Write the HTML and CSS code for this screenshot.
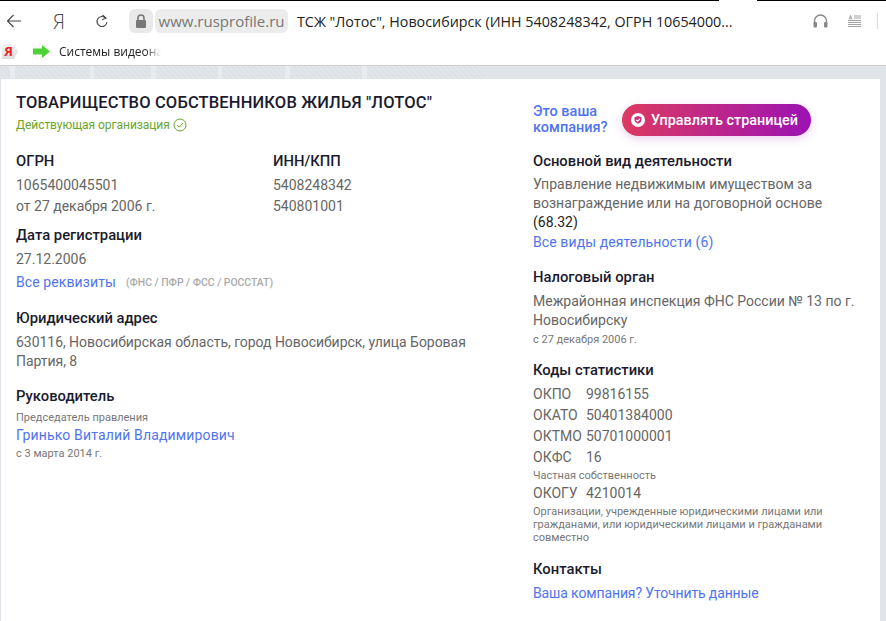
FILE: index.html
```html
<!DOCTYPE html>
<html lang="ru">
<head>
    <meta charset="UTF-8">
    <title>ТСЖ "Лотос"</title>
    <link rel="stylesheet" href="styles.css">
</head>
<body>
    <div class="topline"><span class="topline-a"></span><span class="topline-b"></span></div>
    <div class="toolbar">
        <svg class="ic-back" width="16" height="14" viewBox="0 0 16 14"><path d="M15 7H1.500M7.500 1L1.500 7l6 6" fill="none" stroke="#444" stroke-width="1.100"/></svg>
        <span class="ya">Я</span>
        <svg class="ic-reload" width="14" height="15" viewBox="0 0 14 15"><path d="M10.800 4.200A5 5 0 1 0 12 8" fill="none" stroke="#444" stroke-width="1.100"/><path d="M7.500 1l3.500 3.200-3.800 1.600" fill="none" stroke="#444" stroke-width="1.100"/></svg>
        <span class="lock"><svg width="12" height="14" viewBox="0 0 12 14"><path d="M3 6V4a3 3 0 0 1 6 0v2" fill="none" stroke="#777" stroke-width="1.600"/><rect x="1" y="6" width="10" height="8" rx="1" fill="#777"/></svg></span>
        <span class="host">www.rusprofile.ru</span>
        <span class="page-title">ТСЖ "Лотос", Новосибирск (ИНН 5408248342, ОГРН 10654000...</span>
        <svg class="ic-head" width="15" height="14" viewBox="0 0 15 14"><path d="M1.500 10V7a6 6 0 0 1 12 0v3" fill="none" stroke="#888" stroke-width="1.400"/><rect x="0.500" y="8" width="3.500" height="5.500" rx="1" fill="#888"/><rect x="11" y="8" width="3.500" height="5.500" rx="1" fill="#888"/></svg>
        <svg class="ic-read" width="13" height="13" viewBox="0 0 13 13"><path d="M1 4.500l1.500-4 1.500 4M1.500 3.200h2M6 1h7M6 3h7M0 5.500h13M0 7.500h13M0 9.500h13M0 11.500h13" fill="none" stroke="#999" stroke-width="0.900"/></svg>
        <span class="sep"></span>
    </div>
    <div class="bookmarks">
        <span class="ya-tab">Я</span>
        <svg class="ic-arrow" width="17" height="13" viewBox="0 0 17 13"><path d="M0 3.500h9V0l8 6.500-8 6.500V9.500H0z" fill="#4cd137"/></svg>
        <span class="bm-text">Системы видеонаб</span>
    </div>
    <div class="page">
        <div class="card">
            <div class="col-left">
                <h1 class="org-name">ТОВАРИЩЕСТВО СОБСТВЕННИКОВ ЖИЛЬЯ "ЛОТОС"</h1>
                <div class="status">Действующая организация
                    <svg width="14" height="14" viewBox="0 0 14 14"><circle cx="7" cy="7" r="6" fill="none" stroke="#6aa52b" stroke-width="1"/><path d="M4 7l2.200 2.200L10 5" fill="none" stroke="#6aa52b" stroke-width="1"/></svg>
                </div>
                <div class="codes">
                    <div>
                        <div class="label">ОГРН</div>
                        <div class="val">1065400045501</div>
                        <div class="val">от 27 декабря 2006 г.</div>
                    </div>
                    <div>
                        <div class="label">ИНН/КПП</div>
                        <div class="val">5408248342</div>
                        <div class="val">540801001</div>
                    </div>
                </div>
                <div class="label reg">Дата регистрации</div>
                <div class="val">27.12.2006</div>
                <div class="req"><a class="link">Все реквизиты</a><span class="req-note">(ФНС / ПФР / ФСС / РОССТАТ)</span></div>
                <div class="label addr">Юридический адрес</div>
                <div class="val">630116, Новосибирская область, город Новосибирск, улица Боровая Партия, 8</div>
                <div class="label boss">Руководитель</div>
                <div class="small">Председатель правления</div>
                <a class="link boss-name">Гринько Виталий Владимирович</a>
                <div class="small">с 3 марта 2014 г.</div>
            </div>
            <div class="col-right">
                <div class="claim">
                    <a class="claim-text">Это ваша компания?</a>
                    <span class="btn">
                        <svg width="14" height="14" viewBox="0 0 14 14"><circle cx="7" cy="7" r="7" fill="#fff"/><path d="M7 3l3.500 1.200v2.600c0 2-1.500 3.300-3.500 4-2-.7-3.500-2-3.500-4V4.200z" fill="#d0307a"/><path d="M5.200 6.800l1.400 1.400 2.200-2.300" fill="none" stroke="#fff" stroke-width="1.100"/></svg>
                        Управлять страницей
                    </span>
                </div>
                <div class="label main-act">Основной вид деятельности</div>
                <div class="val">Управление недвижимым имуществом за вознаграждение или на договорной основе <span class="code">(68.32)</span></div>
                <a class="link all-acts">Все виды деятельности (6)</a>
                <div class="label tax">Налоговый орган</div>
                <div class="val">Межрайонная инспекция ФНС России № 13 по г. Новосибирску</div>
                <div class="small tax-date">с 27 декабря 2006 г.</div>
                <div class="label stats">Коды статистики</div>
                <div class="stat"><span>ОКПО</span>99816155</div>
                <div class="stat"><span>ОКАТО</span>50401384000</div>
                <div class="stat"><span>ОКТМО</span>50701000001</div>
                <div class="stat"><span>ОКФС</span>16</div>
                <div class="small stat-note">Частная собственность</div>
                <div class="stat"><span>ОКОГУ</span>4210014</div>
                <div class="small stat-note">Организации, учрежденные юридическими лицами или гражданами, или юридическими лицами и гражданами совместно</div>
                <div class="label contacts">Контакты</div>
                <a class="link contact-link">Ваша компания? Уточнить данные</a>
            </div>
        </div>
    </div>
</body>
</html>
```

FILE: styles.css
```css
html, body {
    margin: 0;
    padding: 0;
}
body {
    width: 886px;
    height: 621px;
    overflow: hidden;
    background: #fff;
    font-family: Roboto, "Noto Sans", sans-serif;
    color: #1b1b2f;
    display: flex;
    flex-direction: column;
}
.topline {
    height: 1px;
    flex: none;
    display: flex;
    justify-content: space-between;
}
.topline-a {
    width: 719px;
    background: #000;
}
.topline-b {
    width: 129px;
    background: #000;
}
.toolbar {
    height: 37px;
    flex: none;
    padding-top: 3px;
    box-sizing: border-box;
    display: flex;
    align-items: center;
    font-family: "Open Sans", sans-serif;
}
.ic-back {
    margin-left: 6px;
}
.ya {
    margin-left: 31px;
    width: 14px;
    font-size: 20px;
    font-weight: 300;
    color: #444;
}
.ic-reload {
    margin-left: 28px;
}
.lock {
    margin-left: 20px;
    width: 24px;
    height: 24px;
    border-radius: 6px;
    background: #e9e9e9;
    display: flex;
    align-items: center;
    justify-content: center;
}
.host {
    margin-left: 2px;
    width: 133px;
    height: 24px;
    line-height: 24px;
    text-align: center;
    border-radius: 6px;
    background: #ececec;
    color: #777;
    font-size: 15px;
    white-space: nowrap;
}
.page-title {
    margin-left: 9px;
    width: 494px;
    font-size: 14.300px;
    color: #222;
    white-space: nowrap;
}
.ic-head {
    margin-left: 22px;
}
.ic-read {
    margin-left: 20px;
}
.sep {
    margin-left: 16px;
    width: 1px;
    height: 16px;
    background: #ddd;
}
.bookmarks {
    height: 28px;
    flex: none;
    display: flex;
    align-items: center;
    border-bottom: 1px solid #cfcfcf;
    box-sizing: border-box;
    font-family: "Open Sans", sans-serif;
}
.ya-tab {
    margin-left: 2px;
    width: 16px;
    height: 15px;
    line-height: 15px;
    padding-right: 3px;
    box-sizing: border-box;
    text-align: center;
    font-size: 13px;
    font-weight: bold;
    color: #e22;
    background: linear-gradient(#f6f6f6, #dcdcdc);
    clip-path: polygon(0 0, 75% 0, 100% 50%, 75% 100%, 0 100%);
}
.ic-arrow {
    margin-left: 15px;
}
.bm-text {
    margin-left: 9px;
    white-space: nowrap;
    font-size: 12px;
    color: #222;
    -webkit-mask-image: linear-gradient(to right, #000 78%, transparent 92%);
    mask-image: linear-gradient(to right, #000 78%, transparent 92%);
}
.page {
    flex: 1;
    background-color: #e1e4e8;
    background-image:
        linear-gradient(to right,
            transparent 10px, #e9ebee 10px, #e9ebee 15px, transparent 15px,
            transparent 90px, #e9ebee 90px, #e9ebee 94px, transparent 94px,
            transparent 151px, #e9ebee 151px, #e9ebee 156px, transparent 156px,
            transparent 218px, #e9ebee 218px, #e9ebee 222px, transparent 222px,
            transparent 285px, #e9ebee 285px, #e9ebee 290px, transparent 290px,
            transparent 362px, #e9ebee 362px, #e9ebee 367px, transparent 367px),
        repeating-linear-gradient(45deg, #dee1e5 0, #dee1e5 2px, #e2e5e9 2px, #e2e5e9 4px);
    background-size: 484px 14px;
    background-repeat: no-repeat;
    padding: 13px 6px 0 1px;
    display: flex;
    min-height: 0;
}
.card {
    flex: 1;
    background: #fff;
    display: flex;
    padding: 14px 0 0 15px;
}
.col-left {
    width: 517px;
    padding-right: 32px;
    box-sizing: border-box;
}
.col-right {
    width: 330px;
}
.org-name {
    margin: 0;
    font-size: 16.500px;
    letter-spacing: .15px;
    line-height: 19px;
    font-weight: 500;
    white-space: nowrap;
}
.status {
    margin-top: 5px;
    font-size: 12px;
    letter-spacing: -.05px;
    line-height: 16px;
    color: #6aa52b;
    display: flex;
    align-items: center;
    gap: 3px;
}
.codes {
    margin-top: 18px;
    display: flex;
}
.codes > div {
    flex: none;
    width: 257px;
}
.label {
    font-size: 14.800px;
    line-height: 20px;
    font-weight: 500;
}
.val {
    margin-top: 5px;
    font-size: 14px;
    line-height: 19px;
    color: #666;
}
.val + .val {
    margin-top: 2px;
}
.small {
    font-size: 11px;
    line-height: 13px;
    color: #777;
}
.link {
    display: block;
    font-size: 14px;
    line-height: 20px;
    color: #4f74f0;
}
.reg {
    margin-top: 9px;
}
.req {
    display: flex;
    align-items: center;
    margin-top: 3px;
}
.req .link {
    letter-spacing: .1px;
}
.req-note {
    margin-left: 10px;
    font-size: 10.400px;
    color: #aaa;
    font-weight: 500;
}
.addr {
    margin-top: 16px;
}
.addr + .val {
    letter-spacing: -.04px;
}
.boss {
    margin-top: 15px;
}
.boss + .small {
    margin-top: 5px;
}
.boss-name {
    margin-top: 1px;
    margin-bottom: 2px;
    letter-spacing: .15px;
}
.claim {
    display: flex;
    align-items: center;
    height: 32px;
    margin-top: 11px;
}
.claim-text {
    width: 89px;
    margin-bottom: 1px;
    font-size: 14.500px;
    line-height: 16px;
    font-weight: 500;
    color: #4f74f0;
}
.btn {
    display: flex;
    align-items: center;
    gap: 6px;
    width: 189px;
    height: 32px;
    padding-left: 9px;
    box-sizing: border-box;
    border-radius: 16px;
    background: linear-gradient(90deg, #dc3a62, #9c12b4);
    box-shadow: 0 3px 10px rgba(160, 30, 180, .2);
    color: #fff;
    font-size: 14.400px;
    font-weight: 500;
}
.main-act {
    margin-top: 15px;
}
.main-act + .val {
    margin-top: 4px;
}
.code {
    color: #222;
}
.all-acts {
    letter-spacing: .1px;
}
.tax {
    margin-top: 15px;
}
.tax + .val {
    margin-top: 5px;
}
.tax-date {
    margin-top: 3px;
}
.stats {
    margin-top: 14px;
}
.stats + .stat {
    margin-top: 4px;
}
.stat {
    font-size: 14px;
    line-height: 21px;
    color: #666;
}
.stat span {
    display: inline-block;
    width: 53px;
}
.stat-note {
    line-height: 13px;
    padding-top: 1px;
    padding-bottom: 1px;
    width: 310px;
}
.contacts {
    margin-top: 14px;
}
.contacts + .link {
    margin-top: 4px;
}
.contact-link {
    letter-spacing: -.13px;
}
```
